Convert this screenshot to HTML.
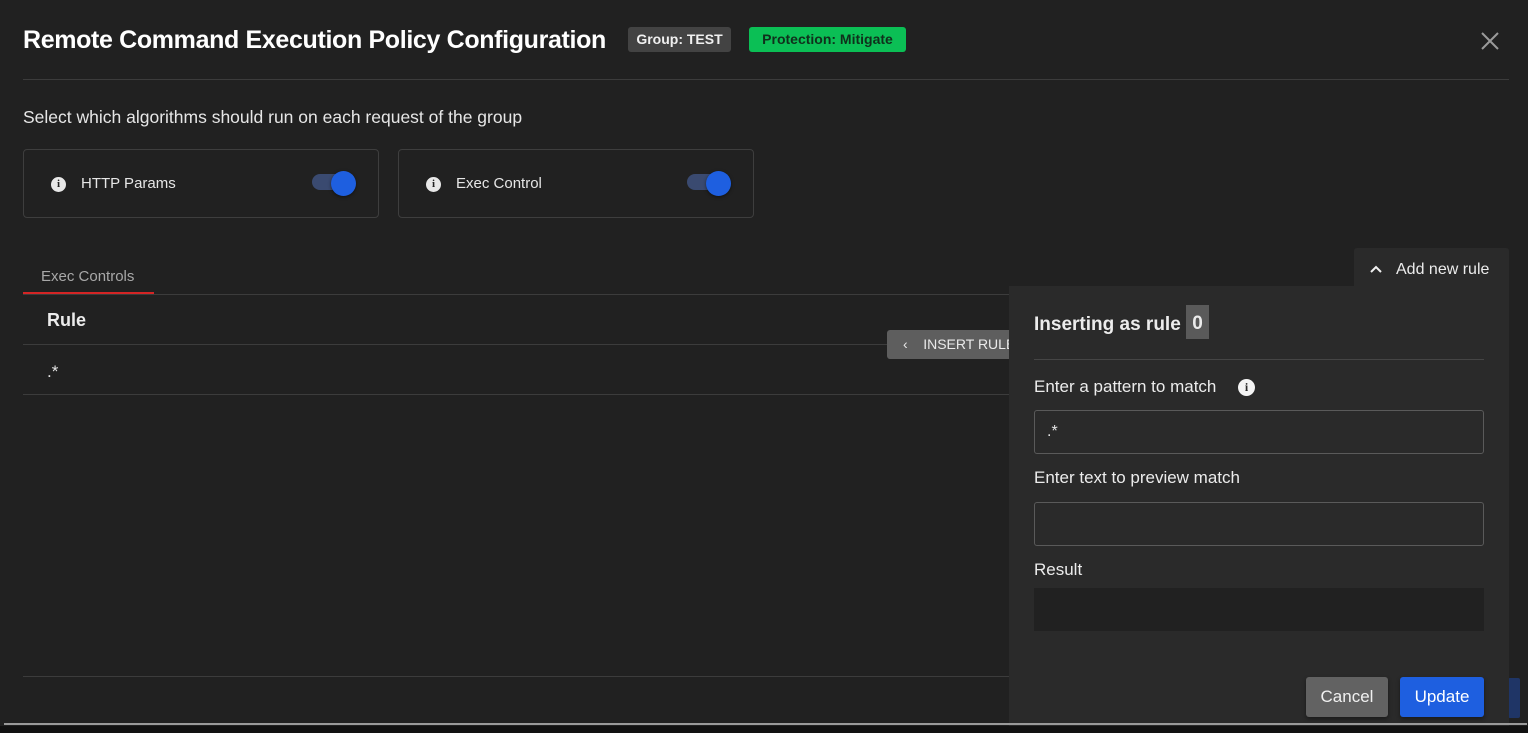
<!DOCTYPE html>
<html><head><style>
*{box-sizing:border-box;margin:0;padding:0}
body{width:1528px;height:733px;background:#212121;font-family:"Liberation Sans",sans-serif;color:#e6e6e6;position:relative;overflow:hidden}
.a{position:absolute}
.hl{position:absolute;height:1px;background:#3c3c3c}
.card{position:absolute;top:149px;width:356px;height:69px;border:1px solid #3e3e3e;border-radius:4px}
.card .ic{position:absolute;left:27px;top:27px;width:15px;height:15px;border-radius:50%;background:#e8e8e8;color:#212121;font-size:11px;font-weight:bold;text-align:center;line-height:15px;font-family:"Liberation Serif",serif}
.card .t{position:absolute;left:57px;top:25px;font-size:15px;color:#e6e6e6}
.tg{position:absolute;left:288px;top:24px;width:30px;height:16px;border-radius:8px;background:#3a4a70}
.kn{position:absolute;left:307px;top:21px;width:25px;height:25px;border-radius:50%;background:#1e5fe0;box-shadow:0 1px 3px rgba(0,0,0,.5)}
.inp{position:absolute;left:1034px;width:450px;height:44px;border:1px solid #5a5a5a;border-radius:3px;background:#2a2a2a}
.lbl{position:absolute;left:1034px;font-size:17px;color:#ececec}
</style></head><body>
<div class="a" style="left:23px;top:26px;font-size:25px;font-weight:bold;color:#fff;letter-spacing:-0.35px">Remote Command Execution Policy Configuration</div>
<div class="a" style="left:628px;top:27px;width:103px;height:25px;background:#434343;border-radius:3px;font-size:14px;font-weight:bold;color:#f0f0f0;text-align:center;line-height:25px">Group: TEST</div>
<div class="a" style="left:749px;top:27px;width:157px;height:25px;background:#0bbf55;border-radius:3px;font-size:14px;font-weight:bold;color:#10301c;text-align:center;line-height:25px">Protection: Mitigate</div>
<svg class="a" style="left:1481px;top:32px" width="18" height="18" viewBox="0 0 18 18"><path d="M1 1L17 17M17 1L1 17" stroke="#9a9a9a" stroke-width="2"/></svg>
<div class="hl" style="left:23px;top:79px;width:1486px"></div>
<div class="a" style="left:23px;top:107px;font-size:17.5px;color:#e6e6e6">Select which algorithms should run on each request of the group</div>
<div class="card" style="left:23px"><div class="ic">i</div><div class="t">HTTP Params</div><div class="tg"></div><div class="kn"></div></div>
<div class="card" style="left:398px"><div class="ic">i</div><div class="t">Exec Control</div><div class="tg"></div><div class="kn"></div></div>
<div class="a" style="left:41px;top:268px;font-size:15px;color:#a8a8a8">Exec Controls</div>
<div class="hl" style="left:23px;top:294px;width:1000px"></div>
<div class="a" style="left:23px;top:292px;width:131px;height:2px;background:#d42525"></div>
<div class="a" style="left:47px;top:310px;font-size:18px;font-weight:bold;color:#ececec">Rule</div>
<div class="hl" style="left:23px;top:344px;width:1000px"></div>
<div class="a" style="left:47px;top:362px;font-size:17px;color:#e6e6e6">.*</div>
<div class="hl" style="left:23px;top:394px;width:1000px"></div>
<div class="a" style="left:887px;top:330px;width:130px;height:29px;background:#5e5e5e;border-radius:3px;font-size:14px;color:#eaeaea;line-height:29px;padding-left:16px">‹&nbsp;&nbsp;&nbsp;&nbsp;INSERT RULE</div>
<div class="hl" style="left:23px;top:676px;width:1000px"></div>
<div class="a" style="left:1354px;top:248px;width:155px;height:40px;background:#2a2a2a;border-radius:3px 3px 0 0"></div>
<svg class="a" style="left:1368px;top:263px" width="16" height="12" viewBox="0 0 16 12"><path d="M3 9L8 4L13 9" fill="none" stroke="#f0f0f0" stroke-width="2"/></svg>
<div class="a" style="left:1396px;top:261px;font-size:16px;color:#ececec">Add new rule</div>
<div class="a" style="left:1508px;top:678px;width:12px;height:40px;background:#1f3566;border-radius:2px"></div>
<div class="a" style="left:1009px;top:286px;width:500px;height:447px;background:#2a2a2a"></div>
<div class="a" style="left:1034px;top:314px;font-size:19px;font-weight:bold;color:#ececec">Inserting as rule</div>
<div class="a" style="left:1186px;top:305px;width:23px;height:34px;background:#5a5a5a;font-size:19px;font-weight:bold;color:#ececec;text-align:center;line-height:38px">0</div>
<div class="hl" style="left:1034px;top:359px;width:450px;background:#454545"></div>
<div class="lbl" style="top:377px">Enter a pattern to match</div>
<div class="a" style="left:1238px;top:379px;width:17px;height:17px;border-radius:50%;background:#f4f4f4;color:#2a2a2a;font-size:12px;font-weight:bold;text-align:center;line-height:17px;font-family:'Liberation Serif',serif">i</div>
<div class="inp" style="top:410px"><span class="a" style="left:12px;top:12px;font-size:16px;color:#e6e6e6">.*</span></div>
<div class="lbl" style="top:468px">Enter text to preview match</div>
<div class="inp" style="top:502px"></div>
<div class="lbl" style="top:560px">Result</div>
<div class="a" style="left:1034px;top:588px;width:450px;height:43px;background:#212121"></div>
<div class="a" style="left:1306px;top:677px;width:82px;height:40px;background:#626262;border-radius:3px;font-size:17px;color:#f0f0f0;text-align:center;line-height:40px;box-shadow:0 2px 4px rgba(0,0,0,.4)">Cancel</div>
<div class="a" style="left:1400px;top:677px;width:84px;height:40px;background:#1e5fe0;border-radius:3px;font-size:17px;color:#fff;text-align:center;line-height:40px;box-shadow:0 2px 4px rgba(0,0,0,.4)">Update</div>
<div class="a" style="left:4px;top:723px;width:1523px;height:2px;background:#9a9a9a"></div>
<div class="a" style="left:0;top:726px;width:1528px;height:7px;background:#111"></div>
</body></html>
